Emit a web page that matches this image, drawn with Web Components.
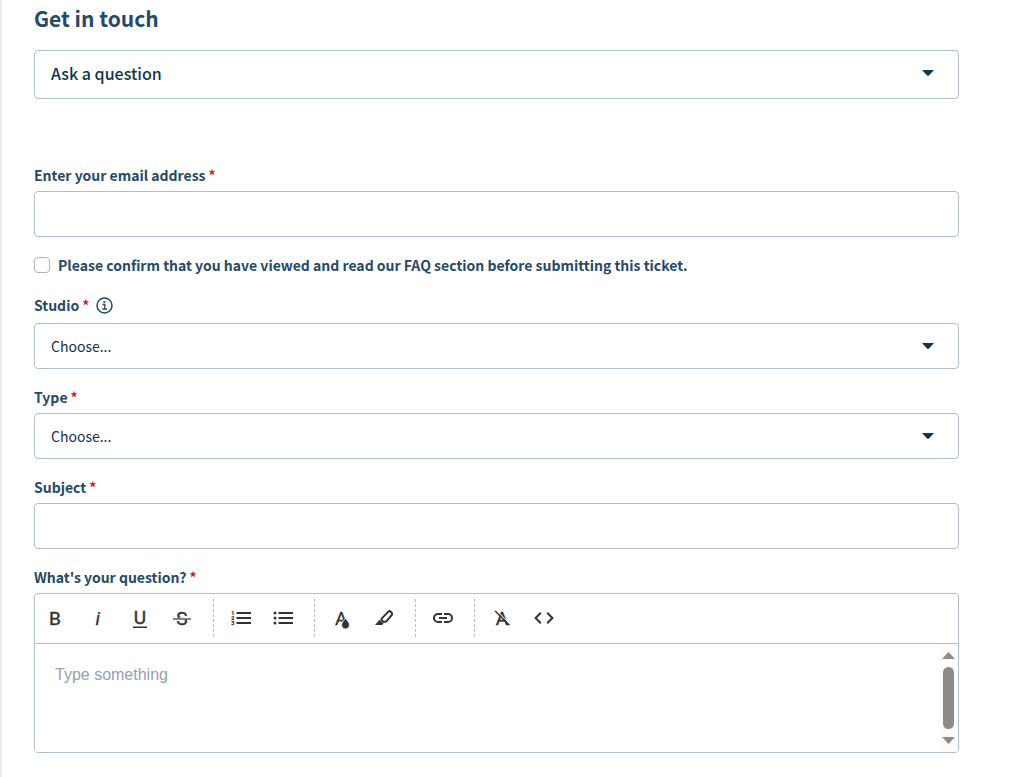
<!DOCTYPE html>
<html lang="en">
<head>
<meta charset="utf-8">
<meta name="viewport" content="width=device-width, initial-scale=1">
<title>Get in touch</title>
<style>
  html {
    min-height: 100%;
    border-left: 2px solid #ebebf0;
  }
  body {
    margin: 0;
    background: #fff;
    --text-color: #264966;
    --value-color: #12344d;
    --border-color: #b0bfcc;
    --required-color: #c82124;
    font-family: "Noto Sans CJK SC", "Noto Sans", sans-serif;
    font-size: 14px;
    line-height: 24px;
    color: var(--text-color);
  }
</style>
</head>
<body>
<contact-form>
  <span slot="title">Get in touch</span>
  <select-field class="topic" large placeholder="Ask a question"></select-field>
  <text-field type="email">Enter your email address</text-field>
  <check-field>Please confirm that you have viewed and read our FAQ section before submitting this ticket.</check-field>
  <select-field info placeholder="Choose...">Studio</select-field>
  <select-field placeholder="Choose...">Type</select-field>
  <text-field type="text">Subject</text-field>
  <rich-editor placeholder="Type something">What's your question?</rich-editor>
</contact-form>

<script>
  // Styles shared by every field
  const fieldStyles = `
    :host {
      display: block;
    }
    * {
      box-sizing: border-box;
    }
    .label {
      display: flex;
      align-items: center;
      min-height: 24px;
      margin-bottom: 4px;
      font-weight: 700;
    }
    .required {
      color: var(--required-color);
      margin-left: 3px;
    }
    .control {
      display: block;
      width: 100%;
      height: 46px;
      margin: 0;
      padding: 0 16px;
      border: 1px solid var(--border-color);
      border-radius: 4px;
      background: #fff;
      color: var(--value-color);
      font: inherit;
    }
  `;

  class ContactForm extends HTMLElement {
    constructor() {
      super();
      const shadow = this.attachShadow({ mode: 'open' });
      shadow.innerHTML = `
        <style>
          :host {
            display: block;
            padding: 2px 57px 24px 32px;
          }
          h1 {
            margin: 0 0 16px;
            font-size: 21px;
            line-height: 32px;
            font-weight: 700;
          }
          form {
            display: flex;
            flex-direction: column;
            gap: 16px;
          }
          ::slotted(.topic) {
            margin-bottom: 48px;
          }
        </style>
        <h1><slot name="title"></slot></h1>
        <form><slot></slot></form>
      `;
    }
  }

  customElements.define('contact-form', ContactForm);

  class TextField extends HTMLElement {
    constructor() {
      super();
      const shadow = this.attachShadow({ mode: 'open' });
      shadow.innerHTML = `
        <style>${fieldStyles}</style>
        <label class="label" for="control"><slot></slot><span class="required">*</span></label>
        <input class="control" id="control" type="${this.getAttribute('type')}" required>
      `;
    }
  }

  customElements.define('text-field', TextField);

  class CheckField extends HTMLElement {
    constructor() {
      super();
      const shadow = this.attachShadow({ mode: 'open' });
      shadow.innerHTML = `
        <style>
          :host {
            display: flex;
            align-items: center;
            gap: 8px;
            font-weight: 700;
          }
          input {
            appearance: none;
            flex: none;
            width: 16px;
            height: 16px;
            margin: 0;
            border: 1px solid #b4b4b4;
            border-radius: 4px;
            background: #fff;
          }
          input:checked {
            background: var(--text-color);
          }
        </style>
        <input id="control" type="checkbox">
        <label for="control"><slot></slot></label>
      `;
    }
  }

  customElements.define('check-field', CheckField);

  class SelectField extends HTMLElement {
    constructor() {
      super();
      const shadow = this.attachShadow({ mode: 'open' });
      const placeholder = this.getAttribute('placeholder');
      const large = this.hasAttribute('large');

      const info = `
        <svg class="info" viewBox="0 0 17 17" role="img" aria-label="More information">
          <circle cx="8.5" cy="8.5" r="7.5" fill="none" stroke="currentColor" stroke-width="1.5"/>
          <circle cx="8.3" cy="5" r="1.1" fill="currentColor"/>
          <path d="M6.5 7.5H8.8V12M6.3 12H11" fill="none" stroke="currentColor" stroke-width="1.3"/>
        </svg>
      `;
      const label = `
        <label class="label ${this.hasAttribute('info') ? 'with-info' : ''}" for="control">
          <slot></slot><span class="required">*</span>${this.hasAttribute('info') ? info : ''}
        </label>
      `;

      shadow.innerHTML = `
        <style>
          ${fieldStyles}
          .with-info {
            margin-bottom: 6px;
          }
          .info {
            width: 17px;
            height: 17px;
            margin-left: 7px;
          }
          .box {
            position: relative;
          }
          select.control {
            appearance: none;
            padding-right: 48px;
          }
          :host([large]) .control {
            height: 49px;
            padding-bottom: 3px;
            font-size: 16px;
            font-weight: 500;
          }
          .arrow {
            position: absolute;
            top: 20px;
            right: 25px;
            width: 12px;
            height: 6px;
            fill: var(--value-color);
            pointer-events: none;
          }
        </style>
        ${large ? '' : label}
        <div class="box">
          <select class="control" id="control" ${large ? 'aria-label="Request form"' : 'required'}>
            <option value="">${placeholder}</option>
          </select>
          <svg class="arrow" viewBox="0 0 12 6" aria-hidden="true"><path d="M0 0H12L7 5.4Q6 6.3 5 5.4Z"/></svg>
        </div>
      `;
    }
  }

  customElements.define('select-field', SelectField);

  // Toolbar icons, drawn on a 24x24 grid
  const icons = {
    bold: '<text x="5" y="19" font-size="19" stroke="currentColor" stroke-width=".4">B</text>',
    italic: '<text x="9.6" y="19" font-size="19" font-style="italic" stroke="currentColor" stroke-width=".3">i</text>',
    underline: '<text x="12" y="18" font-size="19" text-anchor="middle" stroke="currentColor" stroke-width=".4">U</text><path d="M5 20.5H19V22H5Z"/>',
    strike: '<text x="12" y="19" font-size="19" text-anchor="middle" stroke="currentColor" stroke-width=".4">S</text><path d="M3 11.2H21V14.4H3Z" fill="#fff"/><path d="M3 12.2H21V13.7H3Z" opacity=".8"/><path d="M14.5 13.7H17V15H15.4ZM7.2 11.2H9.6V12.2H7.8Z"/>',
    ordered: '<g font-size="6" font-weight="900"><text x="2" y="9">1</text><text x="2" y="14">2</text><text x="2" y="19">3</text></g><path d="M7.5 6H22V8H7.5ZM7.5 11H22V13H7.5ZM7.5 16H22V18H7.5Z"/>',
    unordered: '<path d="M7.5 6H22V8H7.5ZM7.5 11H22V13H7.5ZM7.5 16H22V18H7.5Z"/><circle cx="4" cy="7" r="1.5"/><circle cx="4" cy="12" r="1.5"/><circle cx="4" cy="17" r="1.5"/>',
    color: '<text x="5" y="19" font-size="19" stroke="currentColor" stroke-width=".3">A</text><path d="M15.5 12.3C17.4 14.6 19.5 16.8 19.5 19A4 4 0 0 1 11.5 19C11.5 16.8 13.6 14.6 15.5 12.3Z" stroke="#fff" stroke-width=".8"/>',
    marker: '<path d="M9.6 12.6L16.4 5.6Q17.4 4.7 18.4 5.6L19.9 7Q20.6 8 19.8 9L13.8 15.8H11.4L9.6 14Z" fill="none" stroke="currentColor" stroke-width="2"/><path d="M3 19L7.6 13.8L11.6 17.6L10 19Z"/>',
    link: '<path d="M11 8H7A4 4 0 0 0 7 16H11M13 8H17A4 4 0 0 1 17 16H13M8 12H16" fill="none" stroke="currentColor" stroke-width="2"/>',
    clear: '<text x="12" y="19" font-size="19" text-anchor="middle" stroke="currentColor" stroke-width=".4">A</text><path d="M6.2 4.4L20.4 18.6" fill="none" stroke="#fff" stroke-width="1"/><path d="M5.2 5L19.4 19.2" fill="none" stroke="currentColor" stroke-width="1.5"/>',
    code: '<path d="M8.8 6.8L3.6 12L8.8 17.2M15.2 6.8L20.4 12L15.2 17.2" fill="none" stroke="currentColor" stroke-width="2"/>'
  };

  class ToolButton extends HTMLElement {
    constructor() {
      super();
      const shadow = this.attachShadow({ mode: 'open' });
      shadow.innerHTML = `
        <style>
          :host {
            display: block;
            margin: 0 2px;
          }
          button {
            display: flex;
            align-items: center;
            justify-content: center;
            width: 38px;
            height: 38px;
            padding: 0;
            border: none;
            border-radius: 4px;
            background: none;
            color: #333;
            cursor: pointer;
          }
          button:hover {
            background: #ebebeb;
          }
          svg {
            width: 24px;
            height: 24px;
            fill: currentColor;
            font-family: Roboto, sans-serif;
          }
        </style>
        <button type="button" aria-label="${this.getAttribute('label')}">
          <svg viewBox="0 0 24 24" aria-hidden="true">${icons[this.getAttribute('icon')]}</svg>
        </button>
      `;
    }
  }

  customElements.define('tool-button', ToolButton);

  class RichEditor extends HTMLElement {
    constructor() {
      super();
      const shadow = this.attachShadow({ mode: 'open' });
      shadow.innerHTML = `
        <style>
          ${fieldStyles}
          .editor {
            border: 1px solid var(--border-color);
            border-radius: 4px;
            overflow: hidden;
          }
          .toolbar {
            display: flex;
            flex-wrap: wrap;
            padding: 5px 0 6px;
            border-bottom: 1px solid var(--border-color);
          }
          .separator {
            height: 38px;
            margin: 0 6px 0 10px;
            border-left: 1px dashed var(--border-color);
          }
          .area {
            display: flex;
            height: 108px;
          }
          textarea {
            flex: 1;
            min-width: 0;
            padding: 20px;
            border: none;
            outline: none;
            resize: none;
            overflow: hidden;
            background: #fff;
            color: var(--value-color);
            font-family: "Liberation Sans", Arial, sans-serif;
            font-size: 16px;
            line-height: 22px;
          }
          textarea::placeholder {
            color: #92a2b1;
            opacity: 1;
          }
          .scrollbar {
            display: flex;
            flex-direction: column;
            align-items: center;
            gap: 8px;
            width: 19px;
            padding: 8px 0;
            background: #fcfcfc;
          }
          .scrollbar svg {
            width: 13px;
            height: 7px;
            fill: #8b8b8b;
          }
          .thumb {
            flex: 1;
            width: 11px;
            border-radius: 6px;
            background: #8b8b8b;
          }
        </style>
        <label class="label" for="control"><slot></slot><span class="required">*</span></label>
        <div class="editor">
          <div class="toolbar" role="toolbar" aria-label="Formatting">
            <tool-button icon="bold" label="Bold"></tool-button>
            <tool-button icon="italic" label="Italic"></tool-button>
            <tool-button icon="underline" label="Underline"></tool-button>
            <tool-button icon="strike" label="Strikethrough"></tool-button>
            <div class="separator"></div>
            <tool-button icon="ordered" label="Ordered list"></tool-button>
            <tool-button icon="unordered" label="Unordered list"></tool-button>
            <div class="separator"></div>
            <tool-button icon="color" label="Text color"></tool-button>
            <tool-button icon="marker" label="Background color"></tool-button>
            <div class="separator"></div>
            <tool-button icon="link" label="Insert link"></tool-button>
            <div class="separator"></div>
            <tool-button icon="clear" label="Clear formatting"></tool-button>
            <tool-button icon="code" label="Code view"></tool-button>
          </div>
          <div class="area">
            <textarea id="control" placeholder="${this.getAttribute('placeholder')}"></textarea>
            <div class="scrollbar" aria-hidden="true">
              <svg viewBox="0 0 13 7"><path d="M0 7L6.5 0L13 7Z"/></svg>
              <div class="thumb"></div>
              <svg viewBox="0 0 13 7"><path d="M0 0L6.5 7L13 0Z"/></svg>
            </div>
          </div>
        </div>
      `;
    }
  }

  customElements.define('rich-editor', RichEditor);
</script>
</body>
</html>
